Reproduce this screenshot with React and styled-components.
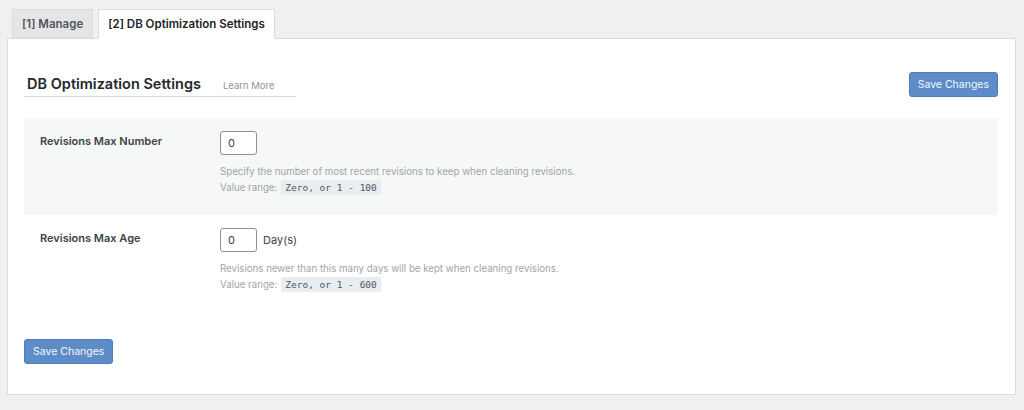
import styled, { createGlobalStyle } from "styled-components";

const GlobalStyle = createGlobalStyle`
  html, body {
    margin: 0;
    padding: 0;
    background: #f0f0f1;
    font-family: Inter, "Liberation Sans", sans-serif;
    color: #3c434a;
  }
`;

const Page = styled.div`
  width: 1024px;
  height: 410px;
  padding: 9px 8px 0 7px;
  box-sizing: border-box;
`;

const Tabs = styled.div`
  display: flex;
  gap: 5px;
  padding-left: 5px;
  margin-bottom: -1px;
  position: relative;
  z-index: 1;
`;

const Tab = styled.div`
  box-sizing: border-box;
  padding: 0 9px;
  display: flex;
  align-items: center;
  font-size: 11.5px;
  font-weight: 600;
  border: 1px solid #dcdcde;
  border-bottom: ${(p) => (p.$active ? "1px solid #fff" : "1px solid #dcdcde")};
  background: ${(p) => (p.$active ? "#fff" : "#e5e5e5")};
  color: ${(p) => (p.$active ? "#1d2327" : "#50575e")};
  height: ${(p) => (p.$active ? "30px" : "29px")};
`;

const Panel = styled.div`
  background: #fff;
  border: 1px solid #dcdcde;
  height: 357px;
  box-sizing: border-box;
  padding: 33px 17px 0 16px;
`;

const Header = styled.div`
  display: flex;
  justify-content: space-between;
  align-items: flex-start;
`;

const TitleWrap = styled.div`
  display: flex;
  align-items: baseline;
  gap: 22px;
  width: 272px;
  padding: 2px 0 4px 3px;
  border-bottom: 1px solid #dcdcde;
  box-sizing: border-box;
  margin-top: 1px;
`;

const Title = styled.h2`
  margin: 0;
  font-size: 14.5px;
  font-weight: 600;
  color: #23282d;
`;

const LearnMore = styled.a`
  font-size: 9.5px;
  color: #8c959f;
  text-decoration: none;
`;

const Button = styled.button`
  background: #5d8cc9;
  color: #f3f6fb;
  border: 1px solid #4f7db8;
  border-radius: 3px;
  font-family: Inter, "Liberation Sans", sans-serif;
  font-size: 10.5px;
  height: 25px;
  padding: 0 8px;
  cursor: pointer;
`;

const Rows = styled.div`
  margin-top: 21px;
`;

const Row = styled.div`
  display: flex;
  background: ${(p) => (p.$shaded ? "#f6f7f7" : "#fff")};
  height: ${(p) => p.$h}px;
  box-sizing: border-box;
  padding: 13px 0 0 16px;
`;

const Label = styled.div`
  width: 180px;
  font-size: 11px;
  font-weight: 600;
  color: #3c434a;
  padding-top: 3px;
`;

const Field = styled.div`
  display: flex;
  flex-direction: column;
`;

const InputLine = styled.div`
  display: flex;
  align-items: center;
  gap: 6px;
  font-size: 11px;
  color: #3c434a;
`;

const NumInput = styled.input`
  width: 37px;
  height: 24px;
  box-sizing: border-box;
  border: 1px solid #8c8f94;
  border-radius: 3px;
  padding: 0 7px;
  font-family: Inter, "Liberation Sans", sans-serif;
  font-size: 11px;
  color: #3c434a;
  background: #fff;
`;

const Desc = styled.div`
  font-size: 9.7px;
  color: #a0a5aa;
  margin-top: ${(p) => p.$mt || 0}px;
  line-height: 16px;
`;

const Code = styled.code`
  font-family: "DejaVu Sans Mono", "Liberation Mono", monospace;
  font-size: 9.5px;
  background: #e8edf2;
  color: #50575e;
  padding: 2px 4px;
  margin-left: 4px;
`;

const Footer = styled.div`
  margin-top: 26px;
`;

export default function App() {
  return (
    <Page>
      <GlobalStyle />
      <Tabs>
        <Tab>[1] Manage</Tab>
        <Tab $active>[2] DB Optimization Settings</Tab>
      </Tabs>
      <Panel>
        <Header>
          <TitleWrap>
            <Title>DB Optimization Settings</Title>
            <LearnMore href="#">Learn More</LearnMore>
          </TitleWrap>
          <Button>Save Changes</Button>
        </Header>
        <Rows>
          <Row $shaded $h={97}>
            <Label>Revisions Max Number</Label>
            <Field>
              <InputLine>
                <NumInput defaultValue="0" />
              </InputLine>
              <Desc $mt={9}>Specify the number of most recent revisions to keep when cleaning revisions.</Desc>
              <Desc>
                Value range:<Code>Zero, or 1 - 100</Code>
              </Desc>
            </Field>
          </Row>
          <Row $h={98}>
            <Label>Revisions Max Age</Label>
            <Field>
              <InputLine>
                <NumInput defaultValue="0" />
                Day(s)
              </InputLine>
              <Desc $mt={9}>Revisions newer than this many days will be kept when cleaning revisions.</Desc>
              <Desc>
                Value range:<Code>Zero, or 1 - 600</Code>
              </Desc>
            </Field>
          </Row>
        </Rows>
        <Footer>
          <Button>Save Changes</Button>
        </Footer>
      </Panel>
    </Page>
  );
}
